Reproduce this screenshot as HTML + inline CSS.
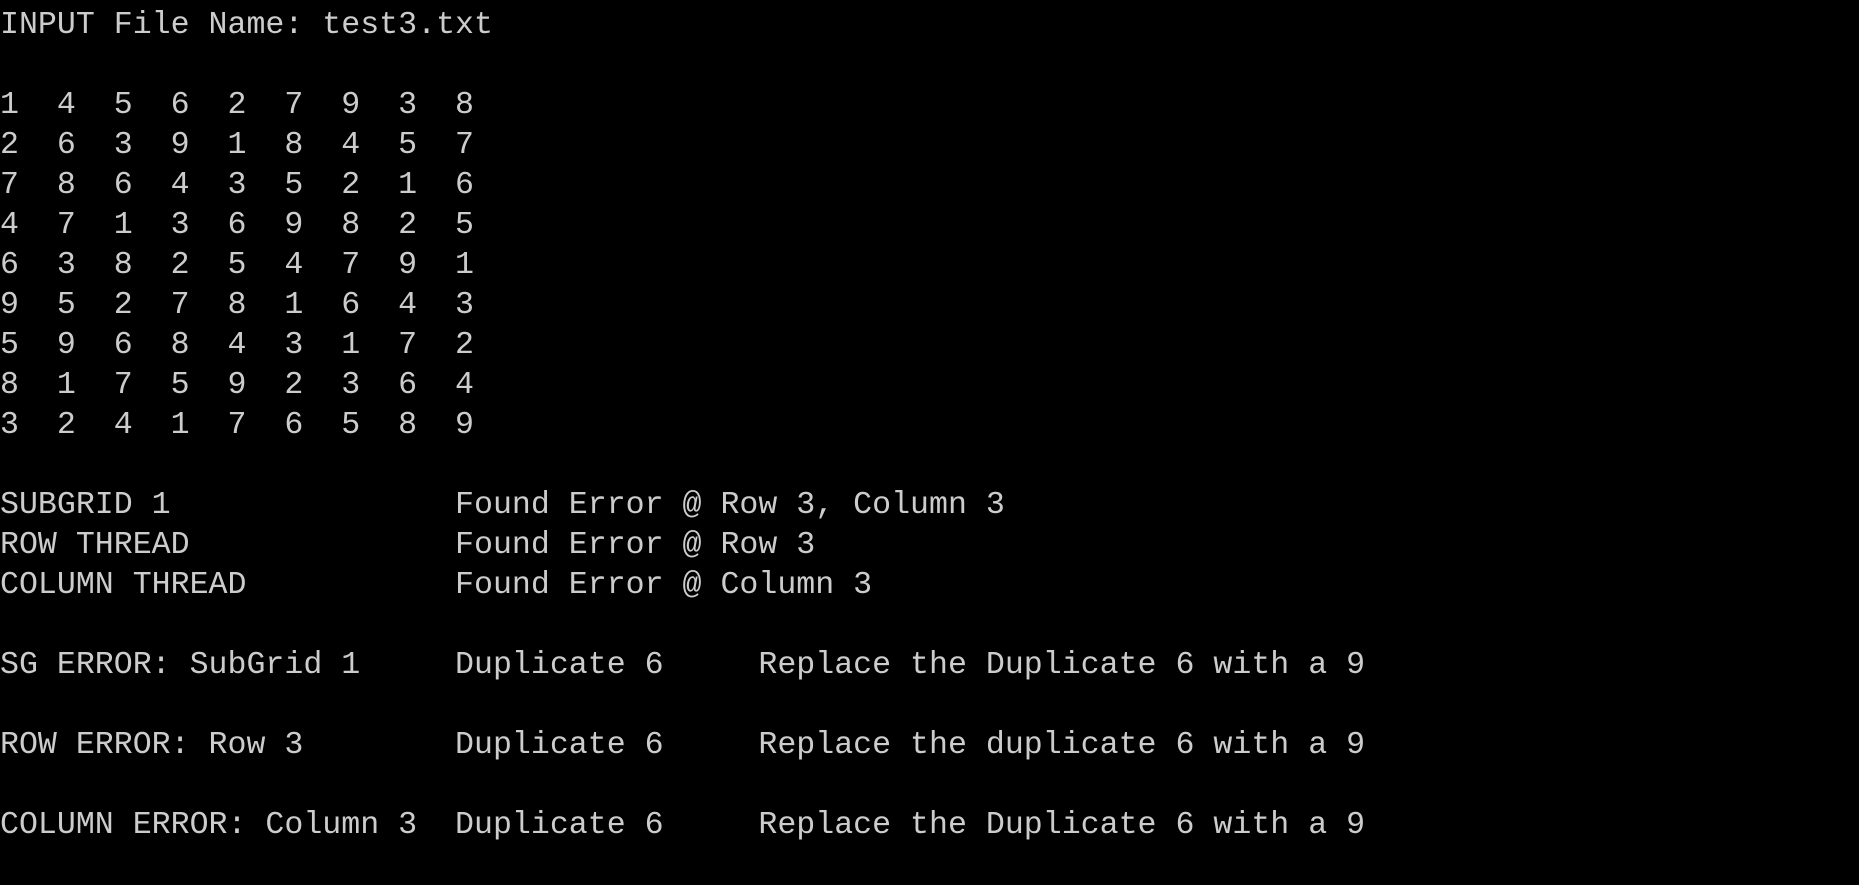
<!DOCTYPE html>
<html><head><meta charset="utf-8"><style>
html,body{margin:0;padding:0;background:#000;width:1859px;height:885px;overflow:hidden}
pre{margin:0;position:absolute;left:0;top:5.5px;font-family:"Liberation Mono",monospace;font-size:31.6px;line-height:40px;color:#cccccc;white-space:pre}
</style></head><body><pre>INPUT File Name: test3.txt

1  4  5  6  2  7  9  3  8
2  6  3  9  1  8  4  5  7
7  8  6  4  3  5  2  1  6
4  7  1  3  6  9  8  2  5
6  3  8  2  5  4  7  9  1
9  5  2  7  8  1  6  4  3
5  9  6  8  4  3  1  7  2
8  1  7  5  9  2  3  6  4
3  2  4  1  7  6  5  8  9

SUBGRID 1               Found Error @ Row 3, Column 3
ROW THREAD              Found Error @ Row 3
COLUMN THREAD           Found Error @ Column 3

SG ERROR: SubGrid 1     Duplicate 6     Replace the Duplicate 6 with a 9

ROW ERROR: Row 3        Duplicate 6     Replace the duplicate 6 with a 9

COLUMN ERROR: Column 3  Duplicate 6     Replace the Duplicate 6 with a 9</pre></body></html>
